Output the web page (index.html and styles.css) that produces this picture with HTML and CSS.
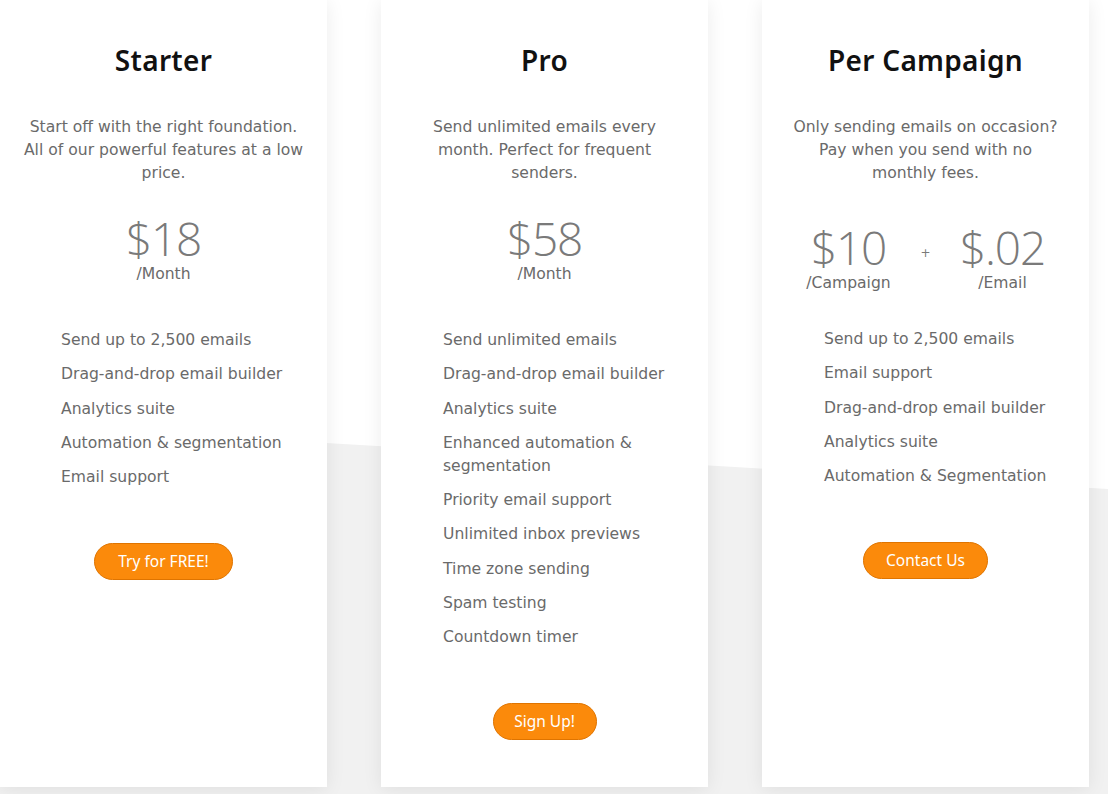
FILE: index.html
```html
<!DOCTYPE html>
<html>
<head>
<meta charset="utf-8">
<link rel="stylesheet" href="styles.css">
</head>
<body>
<div class="page">
  <div class="plans">
    <section class="card">
      <h2 class="title">Starter</h2>
      <p class="desc">Start off with the right foundation.<br>All of our powerful features at a low<br>price.</p>
      <div class="price">
        <div class="amount-group">
          <div class="amount">$18</div>
          <div class="unit">/Month</div>
        </div>
      </div>
      <ul class="features">
        <li>Send up to 2,500 emails</li>
        <li>Drag-and-drop email builder</li>
        <li>Analytics suite</li>
        <li>Automation &amp; segmentation</li>
        <li>Email support</li>
      </ul>
      <a class="btn btn-starter" href="#">Try for FREE!</a>
    </section>

    <section class="card">
      <h2 class="title">Pro</h2>
      <p class="desc">Send unlimited emails every<br>month. Perfect for frequent<br>senders.</p>
      <div class="price">
        <div class="amount-group">
          <div class="amount">$58</div>
          <div class="unit">/Month</div>
        </div>
      </div>
      <ul class="features">
        <li>Send unlimited emails</li>
        <li>Drag-and-drop email builder</li>
        <li>Analytics suite</li>
        <li>Enhanced automation &amp;<br>segmentation</li>
        <li>Priority email support</li>
        <li>Unlimited inbox previews</li>
        <li>Time zone sending</li>
        <li>Spam testing</li>
        <li>Countdown timer</li>
      </ul>
      <a class="btn btn-pro" href="#">Sign Up!</a>
    </section>

    <section class="card">
      <h2 class="title">Per Campaign</h2>
      <p class="desc">Only sending emails on occasion?<br>Pay when you send with no<br>monthly fees.</p>
      <div class="price price-split">
        <div class="amount-group">
          <div class="amount">$10</div>
          <div class="unit">/Campaign</div>
        </div>
        <div class="plus">+</div>
        <div class="amount-group">
          <div class="amount">$.02</div>
          <div class="unit">/Email</div>
        </div>
      </div>
      <ul class="features">
        <li>Send up to 2,500 emails</li>
        <li>Email support</li>
        <li>Drag-and-drop email builder</li>
        <li>Analytics suite</li>
        <li>Automation &amp; Segmentation</li>
      </ul>
      <a class="btn btn-contact" href="#">Contact Us</a>
    </section>
  </div>
</div>
</body>
</html>
```

FILE: styles.css
```css
* { box-sizing: border-box; }

html, body {
  margin: 0;
  padding: 0;
  background: #ffffff;
}

.page {
  position: relative;
  width: 1108px;
  height: 794px;
  overflow: hidden;
  background: #ffffff;
}

.page::before {
  content: "";
  position: absolute;
  inset: 0;
  background: #f1f1f1;
  clip-path: polygon(0 426px, 326px 443px, 735px 467px, 1108px 489px, 1108px 794px, 0 794px);
  z-index: 0;
}

.plans {
  position: relative;
  z-index: 1;
  display: flex;
  gap: 54px;
}

.card {
  width: 327px;
  height: 787px;
  background: #ffffff;
  box-shadow: 0 2px 18px rgba(0, 0, 0, 0.08);
  display: flex;
  flex-direction: column;
  align-items: center;
  padding-top: 43px;
}

.title {
  margin: 0;
  font-family: "Noto Sans", "DejaVu Sans", sans-serif;
  font-weight: 600;
  font-size: 28px;
  line-height: 34px;
  letter-spacing: 0.3px;
  color: #111111;
  text-align: center;
}

.desc {
  margin: 39px 0 0;
  font-family: "DejaVu Sans", sans-serif;
  font-size: 15.6px;
  line-height: 23px;
  color: #6a6a6a;
  text-align: center;
}

.price {
  margin-top: 30px;
  display: flex;
  justify-content: center;
}

.price-split {
  margin-top: 39px;
  display: grid;
  grid-template-columns: 142px 12px 142px;
  justify-content: center;
  align-items: start;
}

.amount-group {
  display: flex;
  flex-direction: column;
  align-items: center;
}

.amount {
  font-family: "Open Sans", sans-serif;
  font-weight: 300;
  font-size: 46px;
  line-height: 46px;
  letter-spacing: -1.2px;
  color: #7a7a7a;
}

.unit {
  margin-top: 3px;
  font-family: "DejaVu Sans", sans-serif;
  font-size: 15.6px;
  line-height: 20px;
  color: #6a6a6a;
}

.plus {
  margin-top: 22px;
  text-align: center;
  font-family: "DejaVu Sans", sans-serif;
  font-size: 12px;
  line-height: 14px;
  color: #7a7a7a;
}

.features {
  list-style: none;
  margin: 45px 0 0;
  padding: 0 30px 0 61px;
  width: 100%;
  font-family: "DejaVu Sans", sans-serif;
  font-size: 15.6px;
  line-height: 23px;
  color: #6a6a6a;
}

.card:nth-child(2) .features { padding-left: 62px; }
.card:nth-child(3) .features { padding-left: 62px; }

.price-split + .features {
  margin-top: 35px;
}

.features li {
  margin-bottom: 11.3px;
  white-space: nowrap;
}

.features li:last-child {
  margin-bottom: 0;
}

.btn {
  display: inline-block;
  margin-top: 54px;
  height: 37px;
  padding: 0;
  border-radius: 19px;
  background: #fb8a0b;
  border: 1px solid #df7400;
  color: #ffffff;
  font-family: "Noto Sans", sans-serif;
  font-size: 15.5px;
  font-weight: 400;
  line-height: 35px;
  text-decoration: none;
  text-align: center;
}

.btn-starter { width: 139px; }
.btn-pro { width: 104px; }
.btn-contact { width: 125px; }
```
